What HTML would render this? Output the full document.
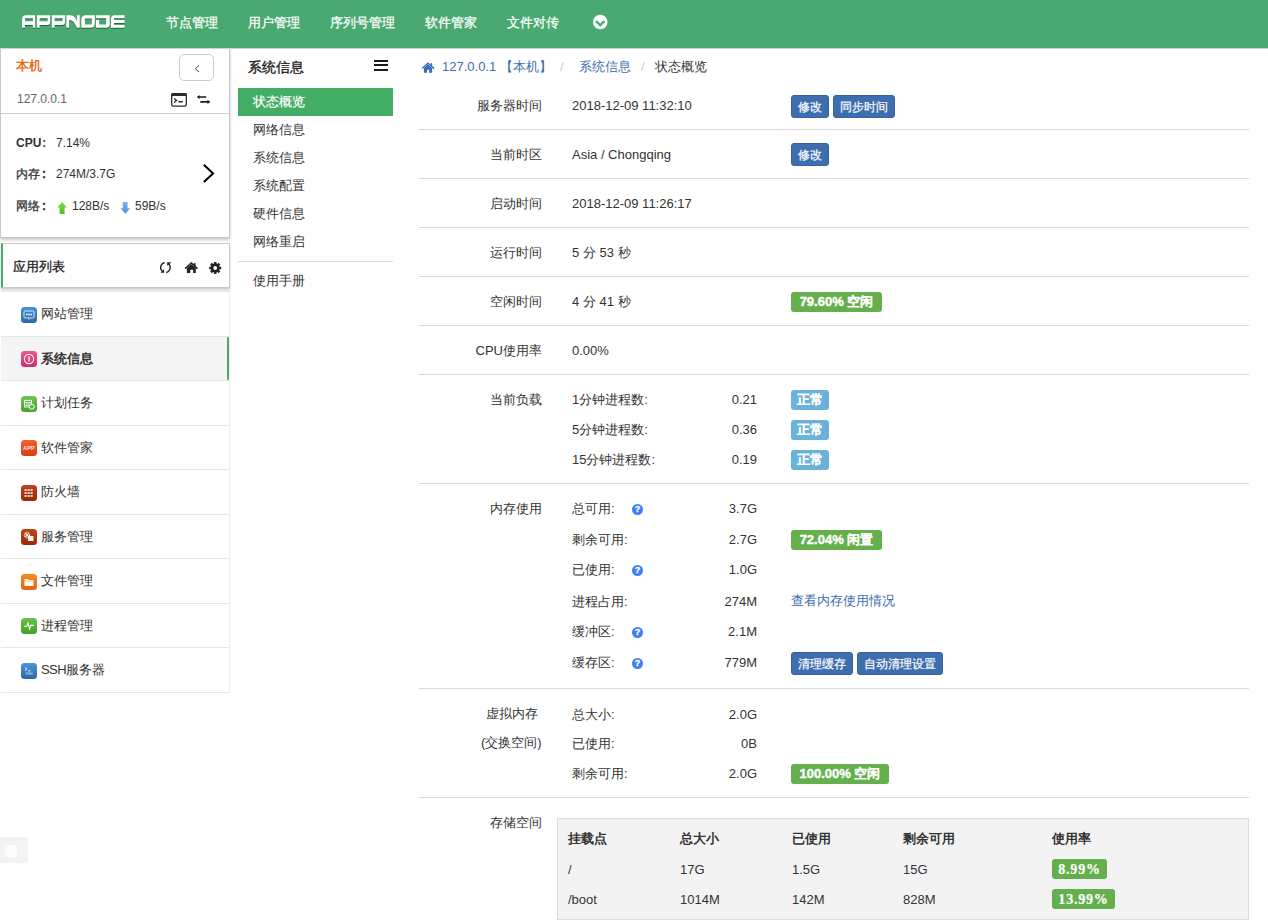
<!DOCTYPE html>
<html><head><meta charset="utf-8">
<style>
*{box-sizing:border-box;margin:0;padding:0}
html,body{width:1268px;height:922px;overflow:hidden;background:#fff;font-family:"Liberation Sans",sans-serif;color:#333;font-size:13px}
.a{position:absolute;white-space:nowrap}
#hdr{position:absolute;left:0;top:0;width:1268px;height:48px;background:#4aa971;box-shadow:0 1px 0 #d2d2d2;z-index:5}
.nav{position:absolute;top:13px;line-height:20px;color:#fff;font-size:13px;-webkit-text-stroke:0.25px #fff}
.p1{position:absolute;left:0;top:48px;width:230px;height:190px;border:1px solid #c8c8c8;border-top:0;background:#fff;box-shadow:0 2px 3px rgba(0,0,0,.22)}
.p2{position:absolute;left:1px;top:243px;width:229px;height:45px;border:1px solid #c8c8c8;border-left:2px solid #4aa971;background:#fff;box-shadow:0 2px 2px rgba(0,0,0,.2)}
.li{position:absolute;left:1px;width:229px;border-bottom:1px solid #e6e6e6;border-right:1px solid #eee}
.li .ic{position:absolute;left:20px;top:14px;width:16px;height:16px}
.li .t{position:absolute;left:40px;top:13px;line-height:18px;font-size:13px;color:#333}
.m2{position:absolute;left:253px;line-height:18px;font-size:13px;color:#333}
.lbl{position:absolute;right:726px;line-height:20px;text-align:right}
.val{position:absolute;left:572px;line-height:20px}
.num{position:absolute;right:511px;line-height:20px;text-align:right}
.hr{position:absolute;left:419px;width:830px;height:1px;background:#d9d9d9}
.btn{position:absolute;height:23px;line-height:22px;border-radius:3px;background:#3d6eb0;border:1px solid #3562a0;color:#fff;font-size:12px;text-align:center;-webkit-text-stroke:0.2px #fff}
.bg{position:absolute;height:20px;line-height:20px;border-radius:3px;background:#65b04d;color:#fff;font-weight:bold;font-size:13px;text-align:center;-webkit-text-stroke:0.4px #fff}
.bi{position:absolute;height:20px;line-height:20px;border-radius:3px;background:#6ab2d9;color:#fff;font-weight:bold;font-size:13px;text-align:center;width:38px;-webkit-text-stroke:0.4px #fff}
.q{position:absolute;left:632px;width:11px;height:11px;border-radius:50%;background:#3d80f4;color:#fff;font-size:9px;line-height:11px;text-align:center;font-weight:bold;-webkit-text-stroke:0.3px #fff}
</style></head><body>
<div id="hdr">
  <svg class="a" style="left:0;top:0;filter:drop-shadow(0 1px 0.6px rgba(0,50,20,.55))" width="140" height="48" viewBox="0 0 140 48"><path fill="#fff" fill-rule="evenodd" d="M22,27.8 V19.4 Q22,15.2 26.2,15.2 H35.15 V27.8 H32.9 V24.9 H25 V27.8 Z M25,18.3 H32.9 V21.25 H25 Z M36.9,27.8 V15.2 H50.2 V21.9 Q50.2,24.9 47.2,24.9 H39.7 V27.8 Z M39.7,18.3 H47.6 V21.25 H39.7 Z M51.8,27.8 V15.2 H65.1 V21.9 Q65.1,24.9 62.1,24.9 H54.6 V27.8 Z M54.6,18.3 H62.5 V21.25 H54.6 Z M66.3,27.8 V15.2 H70.5 C73.5,15.2 76,18 77,21.5 V15.2 H79.8 V27.8 H76.8 C75,23 72.5,20 69.1,20 V27.8 Z M81.3,27.8 V19.7 Q81.3,15.2 85.8,15.2 H94.85 V23.6 Q94.85,27.8 90.6,27.8 Z M84.9,18.4 H91.8 V23.3 Q91.8,24.6 90.5,24.6 H84.9 Z M96,15.2 H109.8 V24 Q109.8,27.8 106,27.8 H96 V20 H99.2 V24.6 H106.1 V18.3 H96 Z M111,27.8 V18.7 Q111,15.2 114.5,15.2 H124.6 V18.2 H114.1 V20 H124.6 V23 H114.1 V25.1 H124.6 V27.8 Z"/></svg>
  <div class="nav" style="left:166px">节点管理</div>
  <div class="nav" style="left:248px">用户管理</div>
  <div class="nav" style="left:330px">序列号管理</div>
  <div class="nav" style="left:425px">软件管家</div>
  <div class="nav" style="left:507px">文件对传</div>
  <svg class="a" style="left:585px;top:8px" width="30" height="28" viewBox="585 8 30 28"><circle cx="600.25" cy="22" r="7.25" fill="#fff"/><path d="M596,21.1 L600.2,25.1 L604.4,21.1" fill="none" stroke="#4aa971" stroke-width="2.3"/></svg>
</div>

<!-- left panel 1 -->
<div class="p1"></div>
<div class="a" style="left:16px;top:57px;line-height:18px;color:#e8600a;font-size:13px;-webkit-text-stroke:0.35px #e8600a">本机</div>
<div class="a" style="left:179px;top:54px;width:35px;height:27px;border:1px solid #ccc;border-radius:5px;background:#fff"></div>
<svg class="a" style="left:0;top:0" width="240" height="240" viewBox="0 0 240 240"><path d="M199,65.5 L195.3,68.7 L199,71.9" fill="none" stroke="#444" stroke-width="1"/><rect x="171.7" y="93.7" width="14.6" height="12.4" rx="1.6" fill="none" stroke="#2a2a2a" stroke-width="1.3"/><rect x="171.2" y="93.2" width="15.6" height="2.9" rx="1" fill="#2a2a2a"/><path d="M174.2,98.4 L176.6,100.4 L174.2,102.5" fill="none" stroke="#2a2a2a" stroke-width="1.3"/><rect x="178.4" y="101" width="4.3" height="1.5" fill="#2a2a2a"/><path d="M199,97 H206.3 M200.3,101.9 H208" stroke="#1a1a1a" stroke-width="1.7"/><path d="M196.8,97 L199.6,94.9 V99.1 Z M210.3,101.9 L207.5,99.8 V104 Z" fill="#1a1a1a"/><path d="M203.8,164.8 L213.1,173.4 L203.8,182" fill="none" stroke="#000" stroke-width="2"/><defs><linearGradient id="gu" x1="0" y1="0" x2="0" y2="1"><stop offset="0" stop-color="#7ad94a"/><stop offset="1" stop-color="#4cc222"/></linearGradient><linearGradient id="gd" x1="0" y1="0" x2="0" y2="1"><stop offset="0" stop-color="#76b4ec"/><stop offset="1" stop-color="#4a94d8"/></linearGradient></defs><path d="M62.1,202 L66.8,207.6 H64.6 V213.9 H59.6 V207.6 H57.4 Z" fill="url(#gu)"/><path d="M122.7,202 H127.6 V208.2 H130.2 L125.3,213.8 L120.5,208.2 H122.7 Z" fill="url(#gd)"/></svg>
<div class="a" style="left:17px;top:91px;line-height:16px;color:#666;font-size:12px">127.0.0.1</div>
<div class="a" style="left:1px;top:113px;width:228px;height:1px;background:#ccc"></div>
<div class="a" style="left:16px;top:135px;line-height:16px;font-size:12px;font-weight:bold">CPU<span style="margin-left:1px">:</span></div>
<div class="a" style="left:56px;top:135px;line-height:16px;font-size:12px">7.14%</div>
<div class="a" style="left:16px;top:166px;line-height:16px;font-size:12px;-webkit-text-stroke:0.3px #333">内存<span style="margin-left:2px;font-weight:bold">:</span></div>
<div class="a" style="left:56px;top:166px;line-height:16px;font-size:12px">274M/3.7G</div>
<div class="a" style="left:16px;top:198px;line-height:16px;font-size:12px;-webkit-text-stroke:0.3px #333">网络<span style="margin-left:2px;font-weight:bold">:</span></div>
<div class="a" style="left:72px;top:198px;line-height:16px;font-size:12px">128B/s</div>
<div class="a" style="left:135px;top:198px;line-height:16px;font-size:12px">59B/s</div>

<!-- app list -->
<div class="p2"></div>
<div class="a" style="left:13px;top:258px;line-height:18px;font-size:13px;color:#222;-webkit-text-stroke:0.3px #222">应用列表</div>
<svg class="a" style="left:150px;top:255px" width="80" height="25" viewBox="150 255 80 25"><path d="M164.6,262.6 A5.1,5.1 0 0 0 162.6,271.6" fill="none" stroke="#222" stroke-width="1.35"/><path d="M160.5,272.8 H164.1 V269.2 Z" fill="#222"/><path d="M166.2,272.5 A5.1,5.1 0 0 0 168.2,263.5" fill="none" stroke="#222" stroke-width="1.35"/><path d="M171.3,262.2 H167.2 V266 Z" fill="#222"/><path d="M185.1,268.6 L191.3,263 L197.5,268.6" fill="none" stroke="#222" stroke-width="1.5"/><path d="M186.9,268 L191.3,264.3 L195.8,268 V272.9 H193.1 V269.8 H190.3 V272.9 H186.9 Z M193.6,263.2 H195.6 V266.6 L193.6,265 Z" fill="#222"/><g transform="translate(215.2,268)"><circle r="4.4" fill="#222"/><g fill="#222"><rect x="-1.3" y="-6" width="2.6" height="12"/><rect x="-1.3" y="-6" width="2.6" height="12" transform="rotate(45)"/><rect x="-1.3" y="-6" width="2.6" height="12" transform="rotate(90)"/><rect x="-1.3" y="-6" width="2.6" height="12" transform="rotate(135)"/></g><circle r="1.9" fill="#fff"/></g></svg>
<div class="a" style="left:1px;top:291px;width:229px;height:1px;background:#e6e6e6"></div>
<div class="a" style="left:1px;top:336px;width:228px;height:1px;background:#e6e6e6"></div>
<div class="li" style="top:292px;height:45px"><svg class="ic" style="top:15px" width="16" height="16" viewBox="0 0 16 16"><defs><linearGradient id="i1" x1="0" y1="0" x2="0" y2="1"><stop offset="0" stop-color="#4a94d4"/><stop offset="1" stop-color="#2c68a8"/></linearGradient></defs><rect width="16" height="16" rx="3.5" fill="url(#i1)"/><rect x="3" y="4" width="10" height="7" rx="1.2" fill="none" stroke="#cfe3f5" stroke-width="1"/><path d="M5,7.5 H11" stroke="#fff" stroke-width="1.6" stroke-dasharray="1.6 0.6"/><path d="M8,11.5 V13" stroke="#cfe3f5" stroke-width="0.8"/></svg><div class="t">网站管理</div></div>
<div class="li" style="top:337px;height:44px;background:#f5f5f5"><div class="a" style="left:226px;top:0;width:2px;bottom:0;background:#4aa971;border-radius:1px"></div><svg class="ic" width="16" height="16" viewBox="0 0 16 16"><defs><linearGradient id="i2" x1="0" y1="0" x2="0" y2="1"><stop offset="0" stop-color="#ec5a92"/><stop offset="1" stop-color="#cc2f68"/></linearGradient></defs><rect width="16" height="16" rx="3.5" fill="url(#i2)"/><circle cx="8" cy="8" r="4.6" fill="none" stroke="#fff" stroke-width="1.1"/><path d="M8,5.6 V10.4" stroke="#fff" stroke-width="1.3"/></svg><div class="t" style="font-weight:bold">系统信息</div></div>
<div class="li" style="top:381px;height:45px"><svg class="ic" style="top:15px" width="16" height="16" viewBox="0 0 16 16"><defs><linearGradient id="i3" x1="0" y1="0" x2="0" y2="1"><stop offset="0" stop-color="#72c454"/><stop offset="1" stop-color="#46a02e"/></linearGradient></defs><rect width="16" height="16" rx="3.5" fill="url(#i3)"/><rect x="3.5" y="4.5" width="7" height="6.5" fill="none" stroke="#e8f6e0" stroke-width="1"/><path d="M3.5,6.5 H10.5 M5,3.5 V5 M9,3.5 V5 M4.5,8 H9.5 M4.5,9.6 H8" stroke="#e8f6e0" stroke-width="0.9"/><circle cx="10.8" cy="10.8" r="2.5" fill="#5cb43e" stroke="#fff" stroke-width="1"/></svg><div class="t">计划任务</div></div>
<div class="li" style="top:426px;height:44px"><svg class="ic" width="16" height="16" viewBox="0 0 16 16"><defs><linearGradient id="i4" x1="0" y1="0" x2="0" y2="1"><stop offset="0" stop-color="#f0632c"/><stop offset="1" stop-color="#d2400e"/></linearGradient></defs><rect width="16" height="16" rx="3.5" fill="url(#i4)"/><text x="8" y="10.2" font-family="Liberation Sans" font-weight="bold" font-size="5.6" fill="#fde" text-anchor="middle" letter-spacing="0.2">APP</text></svg><div class="t">软件管家</div></div>
<div class="li" style="top:470px;height:45px"><svg class="ic" style="top:15px" width="16" height="16" viewBox="0 0 16 16"><defs><linearGradient id="i5" x1="0" y1="0" x2="0" y2="1"><stop offset="0" stop-color="#c2431a"/><stop offset="1" stop-color="#962a08"/></linearGradient></defs><rect width="16" height="16" rx="3.5" fill="url(#i5)"/><path d="M3.5,5 H12.5 M3.5,8 H12.5 M3.5,11 H12.5" stroke="#fff" stroke-width="1.4" stroke-dasharray="2.2 0.8"/></svg><div class="t">防火墙</div></div>
<div class="li" style="top:515px;height:44px"><svg class="ic" width="16" height="16" viewBox="0 0 16 16"><defs><linearGradient id="i6" x1="0" y1="0" x2="0" y2="1"><stop offset="0" stop-color="#c2431a"/><stop offset="1" stop-color="#962a08"/></linearGradient></defs><rect width="16" height="16" rx="3.5" fill="url(#i6)"/><rect x="7" y="7" width="5.5" height="5" fill="#fff" opacity=".9"/><circle cx="6" cy="6" r="2.4" fill="none" stroke="#fff" stroke-width="1.6" stroke-dasharray="1 0.6"/><circle cx="6" cy="6" r="1.2" fill="#fff"/></svg><div class="t">服务管理</div></div>
<div class="li" style="top:559px;height:45px"><svg class="ic" style="top:15px" width="16" height="16" viewBox="0 0 16 16"><defs><linearGradient id="i7" x1="0" y1="0" x2="0" y2="1"><stop offset="0" stop-color="#fb8a22"/><stop offset="1" stop-color="#e8620c"/></linearGradient></defs><rect width="16" height="16" rx="3.5" fill="url(#i7)"/><path d="M3.5,5 H7 L7.8,6 H12.5 V12 H3.5 Z" fill="#fff"/><path d="M3.5,7.2 H12.5" stroke="#f5a050" stroke-width="0.6"/></svg><div class="t">文件管理</div></div>
<div class="li" style="top:604px;height:44px"><svg class="ic" width="16" height="16" viewBox="0 0 16 16"><defs><linearGradient id="i8" x1="0" y1="0" x2="0" y2="1"><stop offset="0" stop-color="#6cc44a"/><stop offset="1" stop-color="#43a026"/></linearGradient></defs><rect width="16" height="16" rx="3.5" fill="url(#i8)"/><path d="M3,8.2 H5.8 L7,5 L8.6,11 L9.6,7.4 H13" fill="none" stroke="#fff" stroke-width="1.1"/></svg><div class="t">进程管理</div></div>
<div class="li" style="top:648px;height:45px"><svg class="ic" style="top:15px" width="16" height="16" viewBox="0 0 16 16"><defs><linearGradient id="i9" x1="0" y1="0" x2="0" y2="1"><stop offset="0" stop-color="#4a94d4"/><stop offset="1" stop-color="#2c68a8"/></linearGradient></defs><rect width="16" height="16" rx="3.5" fill="url(#i9)"/><path d="M4,4.5 L6,6 L4,7.5 M7,7.8 H9.5" fill="none" stroke="#fff" stroke-width="0.9"/><text x="8" y="12" font-family="Liberation Sans" font-size="3.4" fill="#cfe3f5" text-anchor="middle">SSH</text></svg><div class="t"><span style="letter-spacing:-0.6px">SSH</span>服务器</div></div>

<div class="a" style="left:0;top:837px;width:28px;height:26px;background:#f3f3f3;border-radius:0 3px 3px 0"><div class="a" style="left:5px;top:8px;width:12px;height:12px;background:#fcfcfc"></div></div>

<!-- second menu -->
<div class="a" style="left:248px;top:58px;line-height:18px;font-size:14px;color:#222;-webkit-text-stroke:0.35px #222">系统信息</div>
<svg class="a" style="left:370px;top:55px" width="25" height="20" viewBox="370 55 25 20"><path d="M374,61 H388 M374,65 H388 M374,70 H388" stroke="#1a1a1a" stroke-width="2"/></svg>
<div class="a" style="left:238px;top:88px;width:155px;height:28px;background:#44ad66"></div>
<div class="m2" style="top:93px;color:#fff;-webkit-text-stroke:0.2px #fff">状态概览</div>
<div class="m2" style="top:121px">网络信息</div>
<div class="m2" style="top:149px">系统信息</div>
<div class="m2" style="top:177px">系统配置</div>
<div class="m2" style="top:205px">硬件信息</div>
<div class="m2" style="top:233px">网络重启</div>
<div class="a" style="left:238px;top:261px;width:155px;height:1px;background:#ddd"></div>
<div class="m2" style="top:272px">使用手册</div>

<!-- breadcrumb -->
<svg class="a" style="left:418px;top:58px" width="20" height="18" viewBox="418 58 20 18"><path d="M422.1,68.6 L428,63.3 L434.1,68.6" fill="none" stroke="#3a6ab8" stroke-width="1.4"/><path d="M423.9,68 L428,64.5 L432.1,68 V72.8 H429.2 V69.8 H427 V72.8 H423.9 Z M430.8,63 H432.1 V66.5 L430.8,65.5 Z" fill="#3a6ab8"/></svg>
<div class="a" style="left:442px;top:58px;line-height:18px;color:#3d6eb0">127.0.0.1 【本机】</div>
<div class="a" style="left:560px;top:58px;line-height:18px;color:#ccc">/</div>
<div class="a" style="left:579px;top:58px;line-height:18px;color:#3d6eb0">系统信息</div>
<div class="a" style="left:641px;top:58px;line-height:18px;color:#ccc">/</div>
<div class="a" style="left:655px;top:58px;line-height:18px;color:#333">状态概览</div>

<!-- rows -->
<div class="lbl" style="top:96px">服务器时间</div><div class="val" style="top:96px">2018-12-09 11:32:10</div>
<div class="btn" style="left:791px;top:95px;width:38px">修改</div>
<div class="btn" style="left:833px;top:95px;width:62px">同步时间</div>
<div class="hr" style="top:129px"></div>
<div class="lbl" style="top:145px">当前时区</div><div class="val" style="top:145px">Asia / Chongqing</div>
<div class="btn" style="left:791px;top:143px;width:38px">修改</div>
<div class="hr" style="top:178px"></div>
<div class="lbl" style="top:194px">启动时间</div><div class="val" style="top:194px">2018-12-09 11:26:17</div>
<div class="hr" style="top:227px"></div>
<div class="lbl" style="top:243px">运行时间</div><div class="val" style="top:243px">5 分 53 秒</div>
<div class="hr" style="top:276px"></div>
<div class="lbl" style="top:292px">空闲时间</div><div class="val" style="top:292px">4 分 41 秒</div>
<div class="bg" style="left:791px;top:292px;width:91px">79.60% <span style="-webkit-text-stroke:0.1px #fff">空闲</span></div>
<div class="hr" style="top:325px"></div>
<div class="lbl" style="top:341px">CPU使用率</div><div class="val" style="top:341px">0.00%</div>
<div class="hr" style="top:374px"></div>
<div class="lbl" style="top:390px">当前负载</div>
<div class="val" style="top:390px">1分钟进程数:</div><div class="num" style="top:390px">0.21</div><div class="bi" style="left:791px;top:390px;-webkit-text-stroke:0.15px #fff">正常</div>
<div class="val" style="top:420px">5分钟进程数:</div><div class="num" style="top:420px">0.36</div><div class="bi" style="left:791px;top:420px;-webkit-text-stroke:0.15px #fff">正常</div>
<div class="val" style="top:450px">15分钟进程数:</div><div class="num" style="top:450px">0.19</div><div class="bi" style="left:791px;top:450px;-webkit-text-stroke:0.15px #fff">正常</div>
<div class="hr" style="top:483px"></div>
<div class="lbl" style="top:499px">内存使用</div>
<div class="val" style="top:499px">总可用:</div><div class="q" style="top:504px">?</div><div class="num" style="top:499px">3.7G</div>
<div class="val" style="top:530px">剩余可用:</div><div class="num" style="top:530px">2.7G</div><div class="bg" style="left:791px;top:530px;width:91px">72.04% <span style="-webkit-text-stroke:0.1px #fff">闲置</span></div>
<div class="val" style="top:560px">已使用:</div><div class="q" style="top:565px">?</div><div class="num" style="top:560px">1.0G</div>
<div class="val" style="top:592px">进程占用:</div><div class="num" style="top:592px">274M</div><div class="a" style="left:791px;top:592px;line-height:18px;color:#3d6eb0">查看内存使用情况</div>
<div class="val" style="top:622px">缓冲区:</div><div class="q" style="top:627px">?</div><div class="num" style="top:622px">2.1M</div>
<div class="val" style="top:653px">缓存区:</div><div class="q" style="top:658px">?</div><div class="num" style="top:653px">779M</div>
<div class="btn" style="left:791px;top:652px;width:62px">清理缓存</div>
<div class="btn" style="left:857px;top:652px;width:86px">自动清理设置</div>
<div class="hr" style="top:688px"></div>
<div class="a" style="left:486px;top:705px;line-height:18px">虚拟内存</div>
<div class="a" style="left:481px;top:734px;line-height:18px">(交换空间)</div>
<div class="val" style="top:705px">总大小:</div><div class="num" style="top:705px">2.0G</div>
<div class="val" style="top:734px">已使用:</div><div class="num" style="top:734px">0B</div>
<div class="val" style="top:764px">剩余可用:</div><div class="num" style="top:764px">2.0G</div><div class="bg" style="left:791px;top:764px;width:98px">100.00% <span style="-webkit-text-stroke:0.1px #fff">空闲</span></div>
<div class="hr" style="top:797px"></div>
<div class="lbl" style="top:813px">存储空间</div>
<div class="a" style="left:557px;top:818px;width:692px;height:102px;background:#f3f3f3;border:1px solid #ddd"></div>
<div class="a" style="left:568px;top:830px;line-height:18px;font-weight:bold">挂载点</div>
<div class="a" style="left:680px;top:830px;line-height:18px;font-weight:bold">总大小</div>
<div class="a" style="left:792px;top:830px;line-height:18px;font-weight:bold">已使用</div>
<div class="a" style="left:903px;top:830px;line-height:18px;font-weight:bold">剩余可用</div>
<div class="a" style="left:1052px;top:830px;line-height:18px;font-weight:bold">使用率</div>
<div class="a" style="left:568px;top:861px;line-height:18px">/</div>
<div class="a" style="left:680px;top:861px;line-height:18px">17G</div>
<div class="a" style="left:792px;top:861px;line-height:18px">1.5G</div>
<div class="a" style="left:903px;top:861px;line-height:18px">15G</div>
<div class="bg" style="left:1052px;top:859px;width:55px;font-family:'Liberation Serif',serif;font-size:14px;letter-spacing:0.8px;line-height:22px;-webkit-text-stroke:0.2px #fff">8.99%</div>
<div class="a" style="left:568px;top:891px;line-height:18px">/boot</div>
<div class="a" style="left:680px;top:891px;line-height:18px">1014M</div>
<div class="a" style="left:792px;top:891px;line-height:18px">142M</div>
<div class="a" style="left:903px;top:891px;line-height:18px">828M</div>
<div class="bg" style="left:1052px;top:889px;width:63px;font-family:'Liberation Serif',serif;font-size:14px;letter-spacing:0.8px;line-height:22px;-webkit-text-stroke:0.2px #fff">13.99%</div>
</body></html>
